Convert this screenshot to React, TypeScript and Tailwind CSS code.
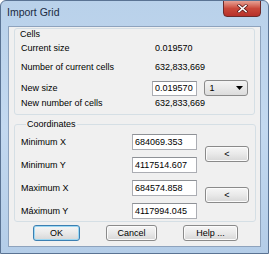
import React from 'react';

const font = { fontFamily: '"Liberation Sans", Arial, sans-serif' };

const Field: React.FC<{ value: string; w: string; h?: string }> = ({ value, w, h = 'h-[15px]' }) => (
  <div
    className={`${w} ${h} bg-white border border-[#abadb3] border-t-[#8e9196] pl-[2px] flex items-center text-[9px] leading-none text-black`}
  >
    {value}
  </div>
);

const Btn: React.FC<{ label: string; w: string; primary?: boolean }> = ({ label, w, primary }) => (
  <div
    className={`${w} h-[16px] rounded-[3px] border flex items-center justify-center text-[9px] leading-none text-black bg-gradient-to-b from-[#f6f6f6] via-[#e9e9e9] to-[#d7d7d7] ${
      primary ? 'border-[#3c7fb1] shadow-[inset_0_0_0_1px_#9cd8f4]' : 'border-[#8a8a8a] shadow-[inset_0_0_0_1px_#fbfbfb]'
    }`}
  >
    {label}
  </div>
);

export default function App() {
  return (
    <div
      className="w-[269px] h-[254px] bg-gradient-to-b from-[#b9d1ea] via-[#c3d9f0] to-[#b4cde8] border border-[#5a7393] rounded-t-[6px] flex flex-col px-[7px] pb-[6px] overflow-hidden"
      style={font}
    >
      {/* title bar */}
      <div className="h-[25px] flex items-start justify-between shrink-0">
        <span className="mt-[6px] -ml-[1px] text-[10.5px] leading-none text-[#1b2a3f]">Import Grid</span>
        <div className="w-[38px] h-[17px] -mt-[1px] rounded-b-[4px] border border-[#6b2a2a] bg-gradient-to-b from-[#e6a195] via-[#c9483a] to-[#b7302a] flex items-center justify-center">
          <svg width="11" height="9" viewBox="0 0 11 9">
            <path d="M2 1.5 L9 7.5 M9 1.5 L2 7.5" stroke="#5a1a1a" strokeWidth="3" strokeLinecap="square" />
            <path d="M2 1.5 L9 7.5 M9 1.5 L2 7.5" stroke="#ffffff" strokeWidth="1.6" strokeLinecap="square" />
          </svg>
        </div>
      </div>

      {/* client area */}
      <div className="flex-1 bg-[#f0f0f0] border border-[#8ea3bd] flex flex-col px-[5px] pt-[1px] text-[9px] leading-none text-black">
        {/* Cells */}
        <div className="border border-[#d5dfe5] rounded-[3px] flex flex-col px-[6px] pb-[6px]">
          <div className="h-[10px] flex items-center -ml-[1px]">Cells</div>
          <div className="h-[10px] mt-[4px] flex items-center">
            <span className="w-[134px]">Current size</span>
            <span>0.019570</span>
          </div>
          <div className="h-[10px] mt-[9px] flex items-center">
            <span className="w-[134px]">Number of current cells</span>
            <span>632,833,669</span>
          </div>
          <div className="h-[16px] mt-[8px] flex items-center">
            <span className="w-[133px]">New size</span>
            <Field value="0.019570" w="w-[46px]" />
            <div className="ml-[7px] w-[44px] h-[16px] rounded-[3px] border border-[#8a8a8a] bg-gradient-to-b from-[#f4f4f4] to-[#dcdcdc] flex items-center justify-between pl-[4px] pr-[4px]">
              <span>1</span>
              <svg width="7" height="4" viewBox="0 0 7 4">
                <path d="M0 0 H7 L3.5 4 Z" fill="#000" />
              </svg>
            </div>
          </div>
          <div className="h-[10px] mt-[2px] flex items-center">
            <span className="w-[134px]">New number of cells</span>
            <span>632,833,669</span>
          </div>
        </div>

        {/* Coordinates */}
        <fieldset className="mt-[4px] border border-[#d5dfe5] rounded-[3px] px-[6px] pb-[2px]">
          <legend className="ml-[5px] px-[1px] h-[10px] leading-[10px]">Coordinates</legend>
          <div className="grid grid-cols-[103px_65px_44px] gap-x-[8px] gap-y-[7px] mt-[5px]">
            <span className="self-center">Minimum X</span>
            <Field value="684069.353" w="w-[65px]" h="h-[16px]" />
            <div className="row-span-2 mt-[12px]">
              <Btn label="<" w="w-[44px]" />
            </div>
            <span className="self-center">Minimum Y</span>
            <Field value="4117514.607" w="w-[65px]" h="h-[16px]" />
            <span className="self-center">Maximum X</span>
            <Field value="684574.858" w="w-[65px]" h="h-[16px]" />
            <div className="row-span-2 mt-[7px]">
              <Btn label="<" w="w-[44px]" />
            </div>
            <span className="self-center">Máximum Y</span>
            <Field value="4117994.045" w="w-[65px]" h="h-[16px]" />
          </div>
        </fieldset>

        {/* buttons */}
        <div className="flex mt-[3px] pl-[19px]">
          <Btn label="OK" w="w-[47px]" primary />
          <div className="ml-[26px]">
            <Btn label="Cancel" w="w-[51px]" />
          </div>
          <div className="ml-[26px]">
            <Btn label="Help ..." w="w-[55px]" />
          </div>
        </div>
      </div>
    </div>
  );
}
